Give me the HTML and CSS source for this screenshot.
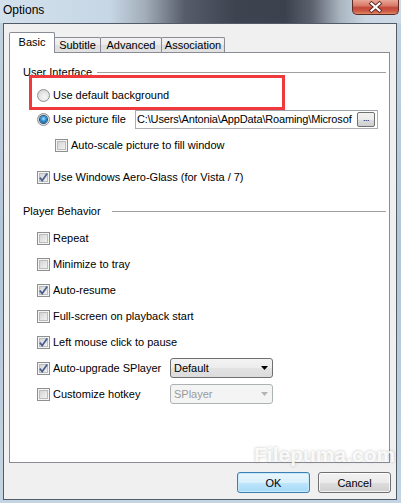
FILE: index.html
```html
<!DOCTYPE html>
<html>
<head>
<meta charset="utf-8">
<title>Options</title>
<link rel="stylesheet" href="styles.css">
</head>
<body>
<div class="window">
  <div class="titlebar">
    <span class="title">Options</span>
    <div class="close">
      <svg width="45" height="14" viewBox="0 0 45 14">
        <path d="M18.5 3.5 L26.5 10.5 M26.5 3.5 L18.5 10.5" stroke="#5b2a25" stroke-width="4" stroke-linecap="square"/>
        <path d="M18.5 3.5 L26.5 10.5 M26.5 3.5 L18.5 10.5" stroke="#ffffff" stroke-width="2.2" stroke-linecap="square"/>
      </svg>
    </div>
  </div>
  <div class="client">
    <div class="tabs">
      <div class="tab active t-basic">Basic</div>
      <div class="tab t-subtitle">Subtitle</div>
      <div class="tab t-advanced">Advanced</div>
      <div class="tab t-assoc">Association</div>
    </div>
    <div class="panel">
      <div class="group-head gh-ui"><span>User Interface</span><i class="rule"></i></div>
      <div class="row ind1 r-default"><span class="radio"></span><span>Use default background</span></div>
      <div class="row ind1 r-picture">
        <span class="radio on"></span><span class="lbl-picture">Use picture file</span>
        <div class="textbox"><span class="path">C:\Users\Antonia\AppData\Roaming\Microsof</span><span class="browse">...</span></div>
      </div>
      <div class="row ind2 r-scale"><span class="check"></span><span>Auto-scale picture to fill window</span></div>
      <div class="row ind1 r-aero"><span class="check on"><svg width="11" height="11" viewBox="0 0 11 11"><path d="M1.8 5.6 L4.2 8.6 L9.2 1.6" fill="none" stroke="#4a5e8c" stroke-width="1.7"/></svg></span><span>Use Windows Aero-Glass (for Vista / 7)</span></div>

      <div class="group-head gh-player"><span>Player Behavior</span><i class="rule"></i></div>
      <div class="behavior">
        <div class="row ind1"><span class="check"></span><span>Repeat</span></div>
        <div class="row ind1"><span class="check"></span><span>Minimize to tray</span></div>
        <div class="row ind1"><span class="check on"><svg width="11" height="11" viewBox="0 0 11 11"><path d="M1.8 5.6 L4.2 8.6 L9.2 1.6" fill="none" stroke="#4a5e8c" stroke-width="1.7"/></svg></span><span>Auto-resume</span></div>
        <div class="row ind1"><span class="check"></span><span>Full-screen on playback start</span></div>
        <div class="row ind1"><span class="check on"><svg width="11" height="11" viewBox="0 0 11 11"><path d="M1.8 5.6 L4.2 8.6 L9.2 1.6" fill="none" stroke="#4a5e8c" stroke-width="1.7"/></svg></span><span>Left mouse click to pause</span></div>
        <div class="row ind1">
          <span class="check on"><svg width="11" height="11" viewBox="0 0 11 11"><path d="M1.8 5.6 L4.2 8.6 L9.2 1.6" fill="none" stroke="#4a5e8c" stroke-width="1.7"/></svg></span><span class="lbl-fixed">Auto-upgrade SPlayer</span>
          <div class="select"><span>Default</span><svg class="arrow" width="7" height="4" viewBox="0 0 7 4"><path d="M0 0 H7 L3.5 4 Z" fill="#000"/></svg></div>
        </div>
        <div class="row ind1">
          <span class="check"></span><span class="lbl-fixed">Customize hotkey</span>
          <div class="select disabled"><span>SPlayer</span><svg class="arrow" width="7" height="4" viewBox="0 0 7 4"><path d="M0 0 H7 L3.5 4 Z" fill="#b4b4b4"/></svg></div>
        </div>
      </div>
    </div>
    <div class="buttons">
      <button class="btn ok">OK</button>
      <button class="btn">Cancel</button>
    </div>
  </div>
  <div class="highlight"></div>
  <div class="watermark">Filepuma.com</div>
</div>
</body>
</html>
```

FILE: styles.css
```css
html, body {
  margin: 0;
  padding: 0;
}
body {
  width: 401px;
  height: 503px;
  overflow: hidden;
  font-family: "Liberation Sans", Arial, sans-serif;
  font-size: 11px;
  color: #000;
}
.window {
  position: relative;
  width: 401px;
  height: 503px;
  display: flex;
  flex-direction: column;
  background:
    linear-gradient(90deg, #d3e1ed 0, #c6d6e4 110px, #a2adb9 145px, #565c69 185px, #3e4350 235px, #3c414e 285px, #5c626e 312px, #a9b4bf 340px, #c9d7e4 365px, #cddbe7 401px) top left / 100% 23px no-repeat,
    linear-gradient(180deg, #c2d2e0 0, #b3c6d6 50%, #c3d4e2 100%);
}
.titlebar {
  height: 23px;
  display: flex;
  align-items: flex-start;
  flex: 0 0 auto;
}
.title {
  padding: 3px 0 0 3px;
  font-size: 12px;
  line-height: 14px;
  color: #000;
}
.close {
  margin-left: auto;
  margin-right: 2px;
  width: 47px;
  height: 15px;
  box-sizing: border-box;
  border: 1px solid #5e2a26;
  border-top: none;
  border-radius: 0 0 5px 5px;
  background: linear-gradient(180deg, #e8a797 0, #d97a68 40%, #c4473a 55%, #cd5a44 80%, #e08a6a 100%);
}
.close svg {
  display: block;
}
.client {
  flex: 1 1 auto;
  margin: 0 4px 3px 3px;
  border: 1px solid #525c68;
  background: #f0f0f0;
  display: flex;
  flex-direction: column;
}
.tabs {
  display: flex;
  align-items: flex-end;
  height: 20px;
  margin: 8px 0 0 5px;
}
.tab {
  box-sizing: border-box;
  height: 15px;
  border: 1px solid #898c95;
  border-bottom: none;
  border-radius: 2px 2px 0 0;
  background: linear-gradient(180deg, #f3f3f3 0, #ebebeb 50%, #dedede 51%, #e2e2e2 100%);
  display: flex;
  align-items: center;
  justify-content: center;
  line-height: 13px;
  margin-left: -1px;
}
.tab.active {
  height: 21px;
  margin-bottom: -1px;
  margin-left: 0;
  background: #fff;
  position: relative;
  z-index: 1;
  padding-bottom: 1px;
}
.t-basic { width: 46px; }
.t-subtitle { width: 47px; }
.t-advanced { width: 62px; }
.t-assoc { width: 64px; }

.panel {
  box-sizing: border-box;
  margin-left: 5px;
  width: 381px;
  height: 411px;
  border: 1px solid #898c95;
  background: #fff;
  padding: 0 3px 0 13px;
  display: flex;
  flex-direction: column;
}
.group-head {
  display: flex;
  align-items: center;
  height: 20px;
}
.rule {
  flex: 1 1 auto;
  height: 1px;
  background: #a0a0a0;
}
.gh-ui { margin-top: 9px; }
.gh-ui .rule { margin-left: 5px; }
.gh-player { margin-top: 14px; }
.gh-player .rule { margin-left: 11px; }

.row {
  display: flex;
  align-items: center;
  height: 20px;
  gap: 3px;
  white-space: nowrap;
}
.ind1 { padding-left: 14px; }
.ind2 { padding-left: 32px; }
.r-default { margin-top: 3px; }
.r-picture { margin-top: 4px; }
.r-scale { margin-top: 6px; }
.r-aero { margin-top: 12px; }
.behavior {
  display: flex;
  flex-direction: column;
  gap: 6px;
  margin-top: 7px;
}

.radio {
  box-sizing: border-box;
  width: 13px;
  height: 13px;
  flex: 0 0 13px;
  border-radius: 50%;
  border: 1px solid #8e8f8f;
  background: radial-gradient(circle at 60% 65%, #f6f6f6 0, #e4e4e4 50%, #c9c9c9 100%);
  display: flex;
  align-items: center;
  justify-content: center;
}
.radio.on::after {
  content: "";
  width: 7px;
  height: 7px;
  border-radius: 50%;
  background: radial-gradient(circle at 50% 40%, #b5ecff 0, #3aa2e4 35%, #0d4d8c 85%);
  box-shadow: 0 0 0 1px #1a4f7a;
}
.check {
  box-sizing: border-box;
  width: 13px;
  height: 13px;
  flex: 0 0 13px;
  border: 1px solid #8e8f8f;
  background: linear-gradient(135deg, #cbcbcb 0, #e6e6e6 55%, #f7f7f7 100%);
  box-shadow: inset 0 0 0 1px #f4f4f4, inset 0 0 0 2px #b9bcc0;
  display: flex;
  align-items: center;
  justify-content: center;
}
.check svg {
  display: block;
}
.lbl-picture { width: 79px; }
.lbl-fixed { width: 114px; }

.textbox {
  box-sizing: border-box;
  width: 243px;
  height: 19px;
  border: 1px solid #abadb3;
  border-top-color: #9ea2aa;
  background: #fff;
  display: flex;
  align-items: center;
  gap: 1px;
  padding: 0 2px 0 1px;
}
.path {
  flex: 1 1 auto;
  min-width: 0;
  overflow: hidden;
  white-space: nowrap;
  letter-spacing: -0.15px;
}
.browse {
  box-sizing: border-box;
  flex: 0 0 18px;
  width: 18px;
  height: 15px;
  border: 1px solid #707070;
  border-radius: 2px;
  background: linear-gradient(180deg, #f2f2f2 0, #ebebeb 50%, #dddddd 51%, #cfcfcf 100%);
  font-size: 9px;
  line-height: 10px;
  text-align: center;
  letter-spacing: -0.5px;
}

.select {
  box-sizing: border-box;
  width: 103px;
  height: 20px;
  border: 1px solid #707070;
  border-radius: 3px;
  background: linear-gradient(180deg, #f3f3f3 0, #ececec 50%, #e2e2e2 51%, #dcdcdc 100%);
  display: flex;
  align-items: center;
  padding: 0 4px 0 3px;
}
.select .arrow {
  margin-left: auto;
  display: block;
}
.select.disabled {
  border-color: #adb2b5;
  background: #f4f4f4;
  color: #9a9a9a;
}

.buttons {
  display: flex;
  justify-content: flex-end;
  gap: 8px;
  padding-right: 5px;
  margin-top: 9px;
}
.btn {
  box-sizing: border-box;
  width: 73px;
  height: 21px;
  margin: 0;
  padding: 0;
  border: 1px solid #707070;
  border-radius: 3px;
  background: linear-gradient(180deg, #f2f2f2 0, #ebebeb 50%, #dddddd 51%, #cfcfcf 100%);
  box-shadow: inset 0 0 0 1px rgba(255, 255, 255, 0.75);
  font-family: "Liberation Sans", Arial, sans-serif;
  font-size: 11px;
  color: #000;
}
.btn.ok {
  border-color: #3c7fb1;
  background: linear-gradient(180deg, #eaf6fd 0, #d9f0fc 50%, #bee6fd 51%, #a7d9f5 100%);
  box-shadow: inset 0 0 0 1px #c5e8fb;
}

.highlight {
  position: absolute;
  left: 29px;
  top: 75px;
  width: 256px;
  height: 35px;
  box-sizing: border-box;
  border: 3px solid #f0393d;
}
.watermark {
  position: absolute;
  left: 254px;
  top: 443px;
  font-family: "Liberation Sans", Arial, sans-serif;
  font-weight: bold;
  font-size: 21px;
  color: rgba(255, 255, 255, 0.88);
  text-shadow: 0 0 3px rgba(110, 110, 110, 0.45);
}
```
